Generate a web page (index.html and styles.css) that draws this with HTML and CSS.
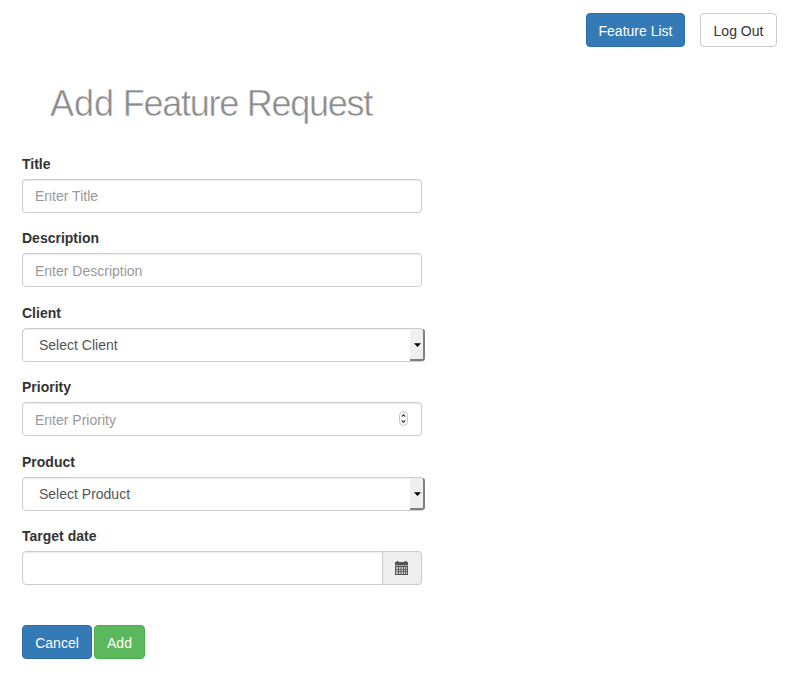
FILE: index.html
```
<!DOCTYPE html>
<html lang="en">
<head>
<meta charset="utf-8">
<title>Add Feature Request</title>
<link rel="stylesheet" href="styles.css">
</head>
<body>
<nav class="topbar">
  <a class="btn btn-primary btn-list">Feature List</a>
  <a class="btn btn-default btn-logout">Log Out</a>
</nav>
<h1 class="page-title"><span class="title-lead">Add</span> Feature Request</h1>
<form class="request-form">
  <div class="form-group">
    <label for="title">Title</label>
    <input class="form-control" id="title" type="text" placeholder="Enter Title">
  </div>
  <div class="form-group">
    <label for="description">Description</label>
    <input class="form-control text-low" id="description" type="text" placeholder="Enter Description">
  </div>
  <div class="form-group">
    <label for="client">Client</label>
    <div class="select-wrap">
      <select class="form-control select" id="client"><option>Select Client</option></select>
      <span class="select-button"><svg width="7" height="4" viewBox="0 0 7 4"><path d="M0 .3h7L3.5 4z"/></svg></span>
    </div>
  </div>
  <div class="form-group">
    <label for="priority">Priority</label>
    <div class="number-wrap">
      <input class="form-control text-low" id="priority" type="text" placeholder="Enter Priority">
      <span class="spinner"><svg width="9" height="15" viewBox="0 0 9 15"><rect x=".5" y=".5" width="8" height="14" rx="4" fill="#fff" stroke="#c4c4c4"/><path d="M2.7 5.6 4.5 3.7l1.8 1.9M2.7 9.4l1.8 1.9 1.8-1.9" fill="none" stroke="#444" stroke-width="1.3"/></svg></span>
    </div>
  </div>
  <div class="form-group">
    <label for="product">Product</label>
    <div class="select-wrap">
      <select class="form-control select" id="product"><option>Select Product</option></select>
      <span class="select-button"><svg width="7" height="4" viewBox="0 0 7 4"><path d="M0 .3h7L3.5 4z"/></svg></span>
    </div>
  </div>
  <div class="form-group">
    <label for="date">Target date</label>
    <div class="input-group">
      <input class="form-control" id="date" type="text">
      <span class="addon"><svg width="13" height="14" viewBox="0 0 13 14"><path fill="#555" d="M0 1h1.5V0h2v1h6V0h2v1H13v3H0z"/><path fill="#aaa" d="M0 4h13v1H0z"/><path fill="#555" d="M0 5h13v9H0z"/><path fill="#ccc" d="M1 6h2v2H1zM4 6h1.6v2H4zM6.4 6H8v2H6.4zM8.8 6h1.4v2H8.8zM11 6h1v2h-1zM1 8.7h2v1.6H1zM4 8.7h1.6v1.6H4zM6.4 8.7H8v1.6H6.4zM8.8 8.7h1.4v1.6H8.8zM11 8.7h1v1.6h-1zM1 11h2v2H1zM4 11h1.6v2H4zM6.4 11H8v2H6.4zM8.8 11h1.4v2H8.8zM11 11h1v2h-1z"/></svg></span>
    </div>
  </div>
  <div class="actions">
    <button class="btn btn-primary btn-cancel" type="button">Cancel</button>
    <button class="btn btn-success" type="button">Add</button>
  </div>
</form>
</body>
</html>
```
FILE: styles.css
```
* { box-sizing: border-box; }

body {
  margin: 0;
  background: #fff;
  color: #333;
  font: 14px/20px "Helvetica Neue", "Liberation Sans", Arial, sans-serif;
}

.topbar {
  display: flex;
  justify-content: flex-end;
  gap: 15px;
  padding: 13px 11px 0 0;
}

.btn {
  display: flex;
  align-items: center;
  justify-content: center;
  height: 34px;
  padding: 2px 0 0;
  border: 1px solid transparent;
  border-radius: 4px;
  font: inherit;
  white-space: nowrap;
}

.btn-primary { color: #fff; background: #337ab7; border-color: #2e6da4; }
.btn-default { color: #333; background: #fff; border-color: #ccc; }
.btn-success { width: 51px; color: #fff; background: #5cb85c; border-color: #4cae4c; }
.btn-list { width: 99px; }
.btn-logout { width: 77px; }
.btn-cancel { width: 70px; }

.page-title {
  margin: 37px 0 0 50px;
  color: #8c8c8c;
  font-size: 36px;
  font-weight: 400;
  line-height: 40px;
  letter-spacing: -1.27px;
  -webkit-text-stroke: 0.45px #fff;
}

.title-lead { letter-spacing: 0; }

.request-form {
  width: 400px;
  margin: 30px 0 0 22px;
}

.form-group {
  height: 59.4px;
  margin-bottom: 15px;
}

label {
  display: block;
  margin-bottom: 5px;
  font-weight: 700;
}

.form-control {
  display: block;
  width: 100%;
  height: 34px;
  margin: 0;
  padding: 6px 12px;
  border: 1px solid #ccc;
  border-radius: 4px;
  background: #fff;
  box-shadow: inset 0 1px 1px rgba(0, 0, 0, .075);
  color: #555;
  font: inherit;
}

.form-control::placeholder { color: #999; opacity: 1; }

.text-low { padding-top: 7px; padding-bottom: 5px; }

.select-wrap {
  position: relative;
  width: 403px;
}

.select { appearance: none; padding-left: 16px; }

.select-button {
  position: absolute;
  top: 1px;
  right: 0;
  display: flex;
  align-items: center;
  justify-content: center;
  width: 15px;
  height: 32px;
  padding: 2px 0 0 2px;
  border-right: 2px solid #808080;
  border-bottom: 2px solid #808080;
  border-radius: 0 3px 3px 0;
  background: #f0f0f0;
}

.number-wrap { position: relative; }

.spinner {
  position: absolute;
  top: 9px;
  right: 14px;
  display: flex;
}

.input-group { display: flex; }
.input-group .form-control { flex: 1; border-radius: 4px 0 0 4px; }

.addon {
  display: flex;
  align-items: center;
  justify-content: center;
  width: 39px;
  height: 34px;
  padding-right: 1px;
  border: 1px solid #ccc;
  border-left: 0;
  border-radius: 0 4px 4px 0;
  background: #eee;
}

.actions {
  display: flex;
  gap: 2px;
  padding-top: 25px;
}
```
